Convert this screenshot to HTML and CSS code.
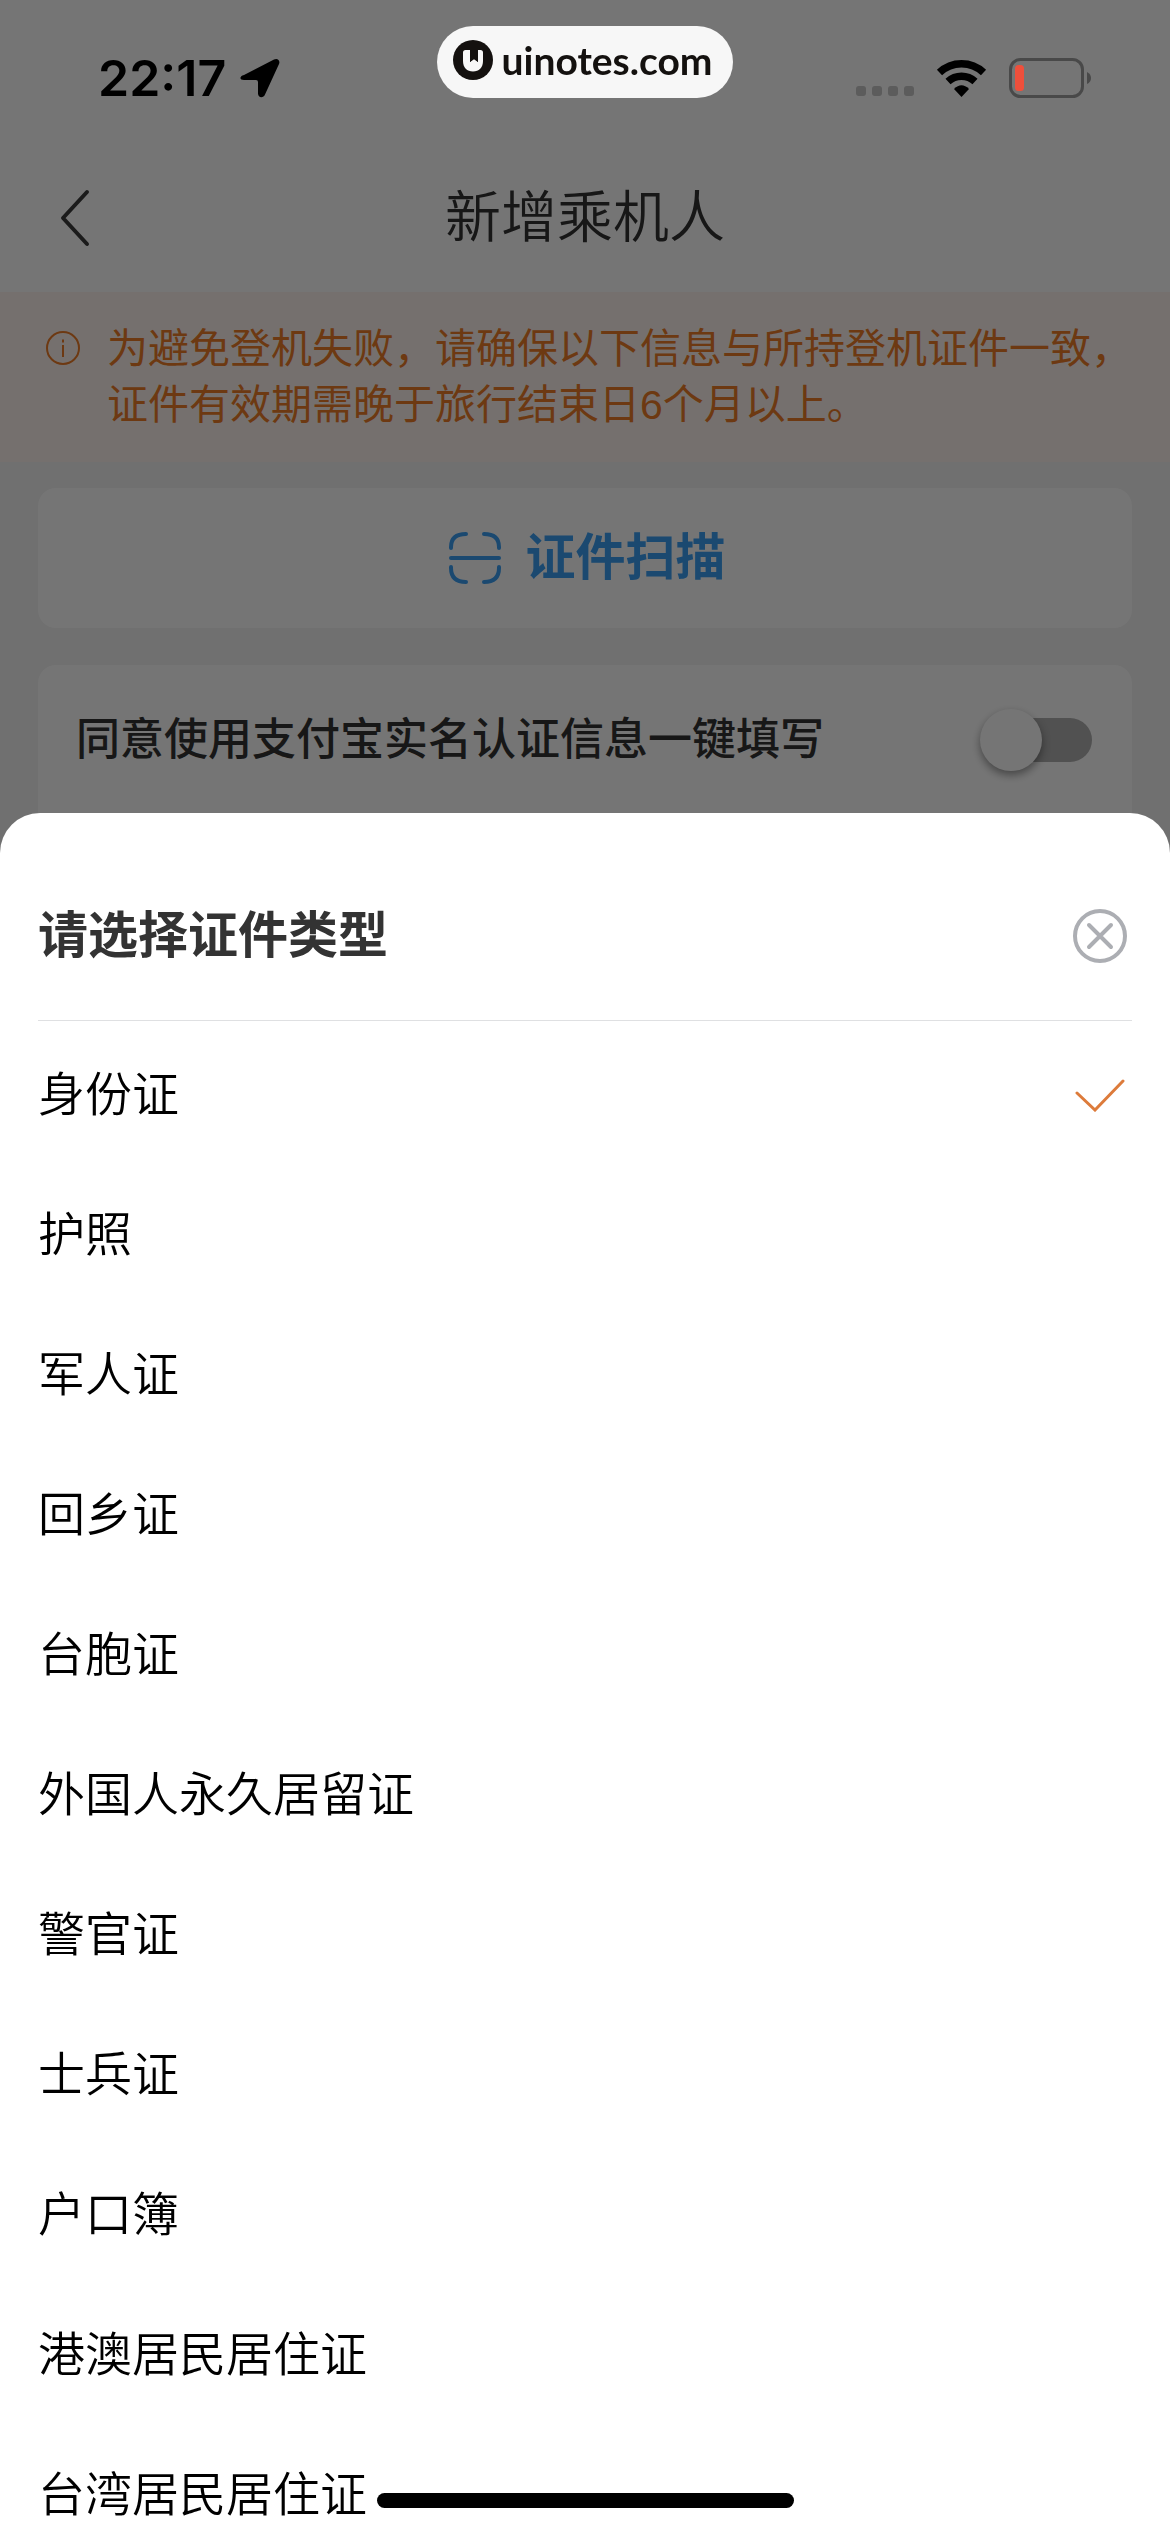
FILE: index.html
```html
<!DOCTYPE html>
<html lang="zh-CN">
<head>
<meta charset="utf-8">
<meta name="viewport" content="width=device-width, initial-scale=1">
<title>新增乘机人</title>
<link rel="stylesheet" href="styles.css">
</head>
<body>
<div class="status-bar">
  <div class="status-left">
    <span class="time">22:17</span>
    <svg class="location" viewBox="0 0 40 40" aria-hidden="true"><path d="M4 17 34 1.500C37.500-.3 40.500 2.500 39 6L25 36.500C23.500 40.500 18 40 18 35.500V24Q18 22 16 22H4C-.5 22-1 18.500 4 17Z"/></svg>
  </div>
  <div class="site-badge">
    <svg class="site-logo" viewBox="0 0 40 40" aria-hidden="true"><circle cx="20" cy="20" r="20" fill="#14110f"/><path d="M10 12.500Q10 10 12.500 10H17V22L21 19 25 22V10H27.500Q30 10 30 12.500V21C30 27.500 26 31.500 20 31.500S10 27.500 10 21Z" fill="#f7f7f7"/><path d="M17 10h8v12l-4-3-4 3Z" fill="#14110f"/></svg>
    <span>uinotes.com</span>
  </div>
  <div class="status-right">
    <span class="signal" aria-hidden="true"><i></i><i></i><i></i><i></i></span>
    <svg class="wifi" viewBox="0 0 51 38" aria-hidden="true"><path d="M3.500 13.500A32 32 0 0 1 47.500 13.500" fill="none" stroke="#000" stroke-width="7.500"/><path d="M12 22.500A20 20 0 0 1 39 22.500" fill="none" stroke="#000" stroke-width="7.500"/><path d="M18 30Q25.500 22.500 33 30L25.500 38Z"/></svg>
    <svg class="battery" viewBox="0 0 83 40" aria-hidden="true"><rect x="1.500" y="1.500" width="72" height="37" rx="10" fill="none" stroke="#494949" stroke-width="3"/><rect x="6" y="7" width="9" height="26" rx="3.500" fill="#ef4f3b"/><path d="M78 14Q82 16 82 20T78 26Z" fill="#494949"/></svg>
  </div>
</div>

<main class="page">
  <header class="nav">
    <button class="back" type="button" aria-label="返回"><svg viewBox="0 0 32 58" aria-hidden="true"><path d="M28 3 4 29 28 55"/></svg></button>
    <h1>新增乘机人</h1>
  </header>
  <div class="notice">
    <svg class="info" viewBox="0 0 34 34" aria-hidden="true"><circle cx="17" cy="17" r="16"/><path d="M17 14V26M17 8.500V11.500"/></svg>
    <p>为避免登机失败，请确保以下信息与所持登机证件一致，<br>证件有效期需晚于旅行结束日6个月以上。</p>
  </div>
  <div class="cards">
    <button class="card scan" type="button">
      <svg viewBox="0 0 52 52" aria-hidden="true"><path d="M2 16V15Q2 2 17 2M35 2Q50 2 50 15V16M50 35V36Q50 50 35 50M17 50Q2 50 2 36V35M2 26H50"/></svg>
      <span>证件扫描</span>
    </button>
    <div class="card agree">
      <label for="autofill">同意使用支付宝实名认证信息一键填写</label>
      <input class="switch" id="autofill" type="checkbox" role="switch">
    </div>
  </div>
</main>

<div class="backdrop">
  <section class="sheet" role="dialog" aria-labelledby="sheet-title">
    <header class="sheet-head">
      <h2 id="sheet-title">请选择证件类型</h2>
      <button class="close" type="button" aria-label="关闭"><svg viewBox="0 0 54 54" aria-hidden="true"><circle cx="27" cy="27" r="25"/><path d="M16 16 38 38M38 16 16 38"/></svg></button>
    </header>
    <div class="options" role="radiogroup" aria-labelledby="sheet-title">
      <label class="option"><span>身份证</span><input type="radio" name="doc" checked><svg class="tick" viewBox="0 0 50 34" aria-hidden="true"><path d="M2 15 20 32 48 3"/></svg></label>
      <label class="option"><span>护照</span><input type="radio" name="doc"></label>
      <label class="option"><span>军人证</span><input type="radio" name="doc"></label>
      <label class="option"><span>回乡证</span><input type="radio" name="doc"></label>
      <label class="option"><span>台胞证</span><input type="radio" name="doc"></label>
      <label class="option"><span>外国人永久居留证</span><input type="radio" name="doc"></label>
      <label class="option"><span>警官证</span><input type="radio" name="doc"></label>
      <label class="option"><span>士兵证</span><input type="radio" name="doc"></label>
      <label class="option"><span>户口簿</span><input type="radio" name="doc"></label>
      <label class="option"><span>港澳居民居住证</span><input type="radio" name="doc"></label>
      <label class="option"><span>台湾居民居住证</span><input type="radio" name="doc"></label>
    </div>
  </section>
</div>
<div class="home-indicator"></div>
</body>
</html>
```
FILE: styles.css
```css
* {
  box-sizing: border-box;
}

body {
  margin: 0;
  height: 100vh;
  overflow: hidden;
  background: #f3f3f3;
  color: #333;
  font-family: "Liberation Sans", "Noto Sans CJK SC", sans-serif;
}

button {
  margin: 0;
  padding: 0;
  border: 0;
  background: none;
  font: inherit;
  color: inherit;
}

h1,
h2,
p {
  margin: 0;
}

svg {
  display: block;
  flex: none;
}

/* Status bar stays above the dimmed page */
.status-bar {
  position: absolute;
  inset: 0 0 auto;
  z-index: 3;
  display: grid;
  grid-template-columns: 1fr auto 1fr;
  align-items: center;
  height: 156px;
  padding: 0 78px;
  color: #000;
}

.status-left {
  display: flex;
  align-items: center;
  gap: 14px;
  padding-left: 20px;
}

.time {
  font: 600 50px/60px Inter, sans-serif;
}

.location {
  width: 40px;
  height: 40px;
}

.site-badge {
  display: flex;
  align-items: center;
  gap: 8px;
  align-self: start;
  height: 72px;
  margin-top: 26px;
  padding: 0 20px 4px 16px;
  border-radius: 36px;
  background: #f7f7f7;
  color: #14110f;
  font: 700 39px/48px Lato, sans-serif;
}

.site-logo {
  width: 40px;
  height: 40px;
}

.status-right {
  display: flex;
  align-items: center;
  justify-content: flex-end;
  gap: 22px;
}

.signal {
  display: flex;
  gap: 6px;
  align-self: flex-end;
  padding-bottom: 2px;
}

.signal i {
  width: 10px;
  height: 10px;
  border-radius: 3px;
  background: #5c5c5c;
}

.wifi {
  width: 51px;
  height: 38px;
}

.battery {
  width: 83px;
  height: 40px;
}

/* Passenger form */
.nav {
  display: grid;
  grid-template-columns: 120px 1fr 120px;
  align-items: center;
  height: 292px;
  padding-top: 144px;
  background: #fff;
}

.back {
  padding-left: 59px;
}

.back svg {
  width: 32px;
  height: 58px;
  fill: none;
  stroke: #3c3c3c;
  stroke-width: 4;
  stroke-linecap: round;
  stroke-linejoin: round;
}

.nav h1 {
  text-align: center;
  font-size: 56px;
  line-height: 80px;
  font-weight: 350;
}

.notice {
  display: flex;
  gap: 27px;
  height: 170px;
  padding: 29px 0 0 46px;
  background: #fff5f0;
  color: #ee7c28;
}

.notice p {
  font-size: 41px;
  line-height: 56px;
  white-space: nowrap;
}

.info {
  width: 34px;
  height: 34px;
  margin-top: 10px;
  fill: none;
  stroke: #ee7c28;
  stroke-width: 2;
}

.cards {
  display: grid;
  gap: 37px;
  padding: 26px 38px;
}

.card {
  display: flex;
  align-items: center;
  border-radius: 18px;
  background: #fff;
}

.scan {
  justify-content: center;
  gap: 25px;
  height: 140px;
  padding-left: 4px;
  color: #3ba0f5;
  font-size: 50px;
  line-height: 72px;
  font-weight: 600;
}

.scan svg {
  width: 52px;
  height: 52px;
  fill: none;
  stroke: #3ba0f5;
  stroke-width: 4;
  stroke-linecap: round;
}

.agree {
  justify-content: space-between;
  height: 190px;
  padding: 0 40px 40px 38px;
  font-size: 44px;
  line-height: 64px;
  font-weight: 500;
}

.switch {
  appearance: none;
  display: flex;
  align-items: center;
  width: 102px;
  height: 44px;
  margin: 0;
  border-radius: 22px;
  background: #b0b0b0;
}

.switch::before {
  content: "";
  flex: none;
  width: 62px;
  height: 62px;
  margin-left: -10px;
  border-radius: 50%;
  background: #fff;
  box-shadow: 0 4px 8px rgba(0, 0, 0, 0.4);
}

/* Document type sheet */
.backdrop {
  position: fixed;
  inset: 0;
  z-index: 2;
  display: flex;
  flex-direction: column;
  padding-top: 813px;
  background: rgba(0, 0, 0, 0.54);
}

.sheet {
  flex: 1;
  min-height: 0;
  padding: 0 38px;
  overflow: hidden;
  border-radius: 40px 40px 0 0;
  background: #fff;
}

.sheet-head {
  display: flex;
  align-items: center;
  justify-content: space-between;
  height: 208px;
  padding: 38px 5px 0 0;
  border-bottom: 1px solid #dfe0e2;
}

.sheet-head h2 {
  font-size: 50px;
  line-height: 72px;
  font-weight: 600;
}

.close svg {
  width: 54px;
  height: 54px;
  fill: none;
  stroke: #acaeb3;
  stroke-width: 4;
  stroke-linecap: round;
}

.options {
  padding-top: 4px;
}

.option {
  display: flex;
  align-items: center;
  justify-content: space-between;
  height: 140px;
  padding-right: 7px;
  color: #000;
  font-size: 47px;
  line-height: 68px;
  font-weight: 350;
}

.option input {
  appearance: none;
  width: 0;
  height: 0;
  margin: 0;
}

.tick {
  display: none;
  width: 50px;
  height: 34px;
  fill: none;
  stroke: #dd7b3b;
  stroke-width: 3;
  stroke-linecap: round;
}

.option input:checked + .tick {
  display: block;
}

.home-indicator {
  position: fixed;
  inset: auto 0 24px;
  z-index: 3;
  width: 417px;
  height: 15px;
  margin: 0 auto;
  border-radius: 8px;
  background: #000;
}
```
